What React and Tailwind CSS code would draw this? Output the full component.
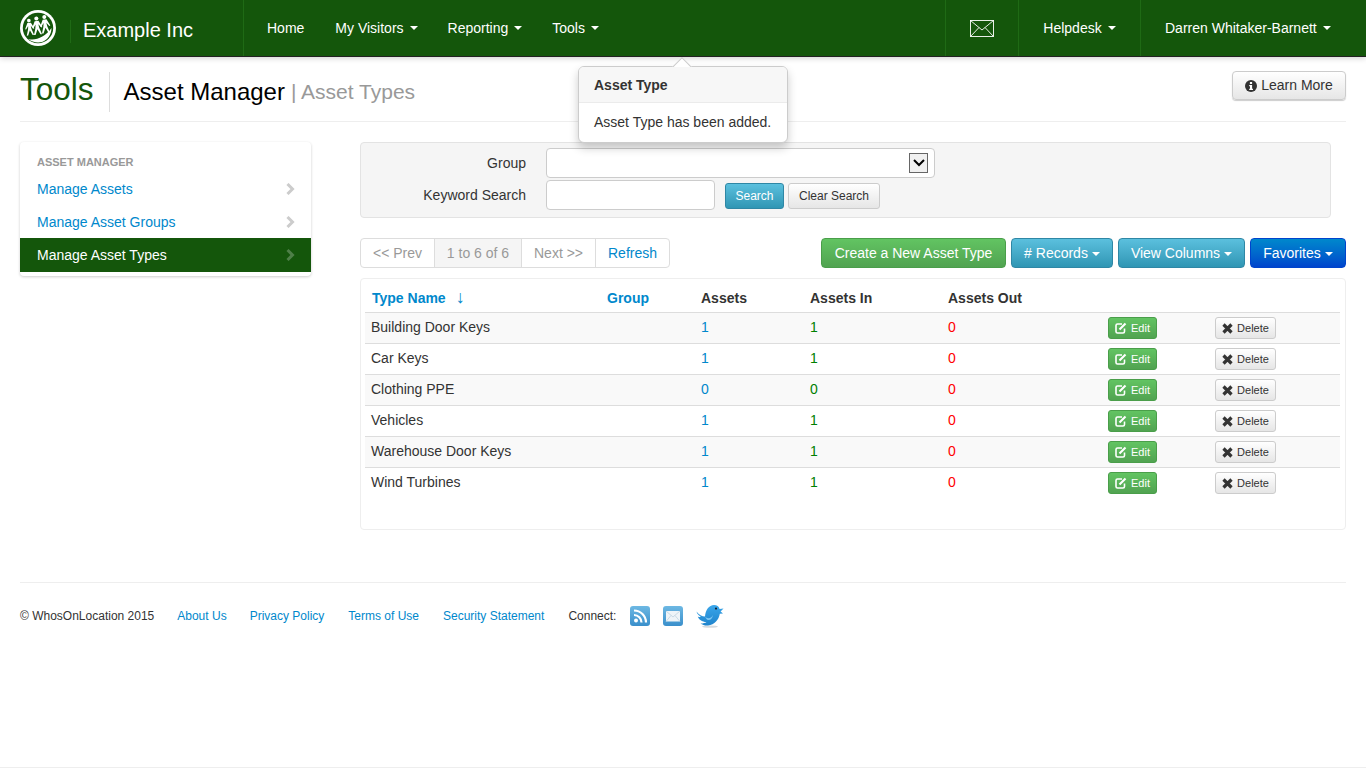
const ROWS = [
  { name: 'Building Door Keys', assets: 1, assetsIn: 1, out: 0 },
  { name: 'Car Keys', assets: 1, assetsIn: 1, out: 0 },
  { name: 'Clothing PPE', assets: 0, assetsIn: 0, out: 0 },
  { name: 'Vehicles', assets: 1, assetsIn: 1, out: 0 },
  { name: 'Warehouse Door Keys', assets: 1, assetsIn: 1, out: 0 },
  { name: 'Wind Turbines', assets: 1, assetsIn: 1, out: 0 },
];

const SIDE_LINKS = ['Manage Assets', 'Manage Asset Groups'];

function Caret({ className = 'ml-[6px]' }) {
  return <span className={`inline-block align-middle w-0 h-0 border-x-[4px] border-x-transparent border-t-[4px] border-t-white ${className}`} />;
}

function Figure({ x, y, s }) {
  return (
    <g transform={`translate(${x} ${y}) scale(${s}) rotate(-6)`} fill="white">
      <circle cx="0" cy="-7.5" r="2.3" />
      <path d="M-2.2 -4.6 L2.2 -4.6 L5.8 2.8 L4.6 3.4 L1.6 -0.8 L2.2 3.4 L4.6 11 L2.8 11 L0 4.8 L-2.8 11 L-4.6 11 L-2.2 3.4 L-1.6 -0.8 L-4.6 3.4 L-5.8 2.8 Z" />
    </g>
  );
}

function Logo() {
  return (
    <svg width="36" height="36" viewBox="0 0 36 36" className="shrink-0">
      <circle cx="18" cy="18" r="18" fill="white" />
      <circle cx="18" cy="18" r="15.2" fill="#14560b" />
      <path d="M8 29 C16 31 25 27 31.5 18 C31.5 24 28 30 22 32 C17 33.2 12 32 8 29 Z" fill="white" />
      <Figure x={9.5} y={16.5} s={0.8} />
      <Figure x={17} y={15} s={0.88} />
      <Figure x={25} y={13.5} s={0.88} />
    </svg>
  );
}

function Chevron({ color }) {
  return (
    <svg width="9" height="12" viewBox="0 0 9 12" fill="none" stroke={color} strokeWidth="3">
      <path d="M1.5 1 L6.5 6 L1.5 11" />
    </svg>
  );
}

function EditIcon() {
  return (
    <svg width="12" height="12" viewBox="0 0 12 12" fill="none" stroke="white">
      <path d="M7 2 L2.5 2 Q1 2 1 3.5 L1 9.5 Q1 11 2.5 11 L8 11 Q9.5 11 9.5 9.5 L9.5 6.5" strokeWidth="1.6" />
      <path d="M4.5 7.5 L10.5 1.5" strokeWidth="2.2" />
    </svg>
  );
}

function CrossIcon() {
  return (
    <svg width="11" height="11" viewBox="0 0 11 11" fill="none" stroke="#333" strokeWidth="3.2">
      <path d="M1.5 1.5 L9.5 9.5 M9.5 1.5 L1.5 9.5" />
    </svg>
  );
}

function InfoIcon() {
  return (
    <svg width="12" height="12" viewBox="0 0 12 12">
      <circle cx="6" cy="6" r="6" fill="#333" />
      <rect x="4.9" y="2" width="2.2" height="2" fill="white" />
      <path d="M4.2 5 L7.1 5 L7.1 8.8 L8 8.8 L8 10 L4.2 10 L4.2 8.8 L5 8.8 L5 6.2 L4.2 6.2 Z" fill="white" />
    </svg>
  );
}

function NavLink({ children, caret = true, className = '' }) {
  return (
    <a className={`flex items-center text-white text-[14px] ${className}`}>
      {children}
      {caret && <Caret />}
    </a>
  );
}

function Popover() {
  return (
    <div className="absolute left-[578px] top-[66px] w-[210px] h-[77px] bg-white border border-[#ccc] rounded-[6px] shadow-[0_5px_10px_rgba(0,0,0,0.2)] z-10">
      <span className="absolute left-[96px] -top-[7px] w-[14px] h-[14px] rotate-45 bg-white border-l border-t border-[#ccc]" />
      <div className="relative h-[36px] pt-[2px] bg-[#f7f7f7] border-b border-[#ebebeb] rounded-t-[5px] px-[15px] flex items-center text-[14px] font-bold text-[#333]">Asset Type</div>
      <div className="px-[15px] pt-[9px] text-[14px] leading-[20px] text-[#333]">Asset Type has been added.</div>
    </div>
  );
}

function RssIcon() {
  return (
    <svg width="20" height="20" viewBox="0 0 20 20" className="block">
      <defs>
        <linearGradient id="blueBox" x1="0" y1="0" x2="0" y2="1">
          <stop offset="0" stopColor="#6db8e3" />
          <stop offset="1" stopColor="#3a8fcb" />
        </linearGradient>
      </defs>
      <rect width="20" height="20" rx="3" fill="url(#blueBox)" />
      <circle cx="6" cy="14.5" r="2" fill="white" />
      <path d="M4 9 A7.5 7.5 0 0 1 11.5 16.5" stroke="white" strokeWidth="2.2" fill="none" />
      <path d="M4 4.5 A12 12 0 0 1 16 16.5" stroke="white" strokeWidth="2.2" fill="none" />
    </svg>
  );
}

function MailIcon() {
  return (
    <svg width="20" height="20" viewBox="0 0 20 20" className="block">
      <defs>
        <linearGradient id="blueBox2" x1="0" y1="0" x2="0" y2="1">
          <stop offset="0" stopColor="#6db8e3" />
          <stop offset="1" stopColor="#3a8fcb" />
        </linearGradient>
      </defs>
      <rect width="20" height="20" rx="3" fill="url(#blueBox2)" />
      <rect x="3" y="5" width="14" height="10.5" fill="#eef4f8" />
      <path d="M3 5 L10 11 L17 5 M3 15.5 L8 9.5 M17 15.5 L12 9.5" stroke="#b9cfdd" strokeWidth="0.7" fill="none" />
    </svg>
  );
}

function TwitterIcon() {
  return (
    <svg width="28" height="24" viewBox="0 0 28 24" className="block">
      <defs>
        <linearGradient id="birdFill" x1="0" y1="0" x2="0" y2="1">
          <stop offset="0" stopColor="#3aa6ea" />
          <stop offset="1" stopColor="#1f84cc" />
        </linearGradient>
      </defs>
      <ellipse cx="14" cy="22.6" rx="8" ry="1.2" fill="#d5dade" />
      <path d="M0.5 7.5 C3 11 6 12.5 9 12.5 C9.5 6 13 1 18 1 C21 1 23 2.6 23.6 5 L27.5 4.5 L24.6 7.4 L27 9.6 L23.8 9.8 C23 15.5 18.5 21 12 21.5 C9 21.7 6.5 20.8 4.5 19.5 C7 19.6 9 19 10.5 18 C6 18 2.5 15 1.8 12.4 C3 13 4 13 5 12.8 C2.8 11.6 1 9.8 0.5 7.5 Z" fill="url(#birdFill)" />
      <path d="M9 12.5 C11 15 15 15 17 11 C16 17 11 18 9 12.5 Z" fill="#7cc6f2" />
      <circle cx="20" cy="4.6" r="1.1" fill="#123" />
    </svg>
  );
}

export default function App() {
  return (
    <div className="relative min-h-[768px] flex flex-col bg-white text-[#333] font-['Liberation_Sans',Arial,sans-serif]">
      {/* Top bar */}
      <header className="h-[57px] shrink-0 flex bg-[#14560b] border-b border-[#222] shadow-[0_1px_6px_rgba(0,0,0,0.2)]">
        <div className="w-[244px] shrink-0 flex items-center pl-[20px] border-r border-[#1f6a15]">
          <Logo />
          <span className="ml-[14px] mt-[7px] h-[23px] border-l border-[#1f6a15]" />
          <span className="ml-[12px] mt-[4px] text-white text-[20px]">Example Inc</span>
        </div>
        <nav className="flex-1 flex pl-[23px] gap-[30px]">
          <NavLink caret={false} className="mr-[1px]">Home</NavLink>
          <NavLink>My Visitors</NavLink>
          <NavLink>Reporting</NavLink>
          <NavLink>Tools</NavLink>
        </nav>
        <div className="w-[73px] flex items-center justify-center border-l border-[#1f6a15]">
          <svg width="24" height="17" viewBox="0 0 24 17" fill="none" stroke="white" strokeWidth="0.9">
            <rect x="0.5" y="0.5" width="23" height="16" />
            <path d="M0.5 0.5 L12 10 L23.5 0.5 M0.5 16.5 L9 7.5 M23.5 16.5 L15 7.5" />
          </svg>
        </div>
        <NavLink className="w-[122px] justify-center border-l border-[#1f6a15]">Helpdesk</NavLink>
        <NavLink className="w-[226px] pl-[24px] border-l border-[#1f6a15]">Darren Whitaker-Barnett</NavLink>
      </header>

      <Popover />

      <main className="px-5">
        {/* Page title */}
        <div className="h-[65px] flex items-start border-b border-[#eee]">
          <div className="mt-[15px] h-[40px] pb-[4px] pr-[15px] border-r border-[#ddd] flex items-center text-[31.5px] leading-none text-[#14560b]">Tools</div>
          <div className="mt-[15px] h-[40px] pl-[14px] pb-[1px] flex items-center">
            <span className="text-[24px] leading-none text-black">Asset Manager</span>
            <span className="ml-[6px] text-[21px] leading-none text-[#999]">| Asset Types</span>
          </div>
          <button className="ml-auto mt-[14px] w-[114px] h-[29px] flex items-center justify-center gap-[4px] text-[14px] text-[#333] border border-[#ccc] rounded-[4px] bg-gradient-to-b from-white to-[#e6e6e6] shadow-[0_1px_1px_rgba(0,0,0,0.2)]">
            <InfoIcon />
            Learn More
          </button>
        </div>

        <div className="flex items-start mt-[20px]">
          {/* Sidebar */}
          <aside className="w-[291px] shrink-0 h-[134px] mr-[49px] rounded-[4px] bg-white shadow-[0_1px_3px_rgba(0,0,0,0.2)] pt-[12px]">
            <div className="pl-[17px] h-[18px] text-[11px] leading-[16px] font-bold text-[#999]">ASSET MANAGER</div>
            {SIDE_LINKS.map(l => (
              <a key={l} className="h-[33px] pt-[1px] pl-[17px] pr-[16px] flex items-center justify-between text-[14px] text-[#0088cc]">
                {l}
                <Chevron color="#ccc" />
              </a>
            ))}
            <a className="h-[34px] pl-[17px] pr-[16px] flex items-center justify-between text-[14px] text-white bg-[#14560b]">
              Manage Asset Types
              <Chevron color="#4e7f48" />
            </a>
          </aside>

          <div className="flex-1 min-w-0">
            {/* Search form */}
            <div className="mr-[15px] h-[76px] bg-[#f5f5f5] border border-[#e3e3e3] rounded-[4px] grid grid-cols-[165px_1fr] gap-x-[20px] pt-[5px] text-[14px] content-start">
              <label className="h-[30px] flex items-center justify-end text-[#333]">Group</label>
              <div className="h-[30px] w-[389px] bg-white border border-[#ccc] rounded-[4px] flex items-center justify-end pr-[6px]">
                <span className="w-[19px] h-[20px] border border-[#666] bg-[#f0f0f0] flex items-center justify-center">
                  <svg width="12" height="8" viewBox="0 0 12 8" fill="none" stroke="black" strokeWidth="2"><path d="M1 1 L6 6 L11 1" /></svg>
                </span>
              </div>
              <label className="h-[30px] mt-[2px] flex items-center justify-end text-[#333]">Keyword Search</label>
              <div className="mt-[2px] flex items-center">
                <input className="w-[169px] h-[30px] bg-white border border-[#ccc] rounded-[4px]" />
                <button className="ml-[10px] mt-[2px] w-[59px] h-[26px] text-[12px] text-white rounded-[3px] border border-[#2f87a5] bg-gradient-to-b from-[#5bc0de] to-[#2f96b4]">Search</button>
                <button className="ml-[4px] mt-[2px] w-[92px] h-[26px] text-[12px] text-[#333] rounded-[3px] border border-[#ccc] bg-gradient-to-b from-white to-[#e6e6e6]">Clear Search</button>
              </div>
            </div>

            {/* Toolbar */}
            <div className="mt-[20px] h-[30px] flex items-center text-[14px]">
              <div className="flex h-[30px] border border-[#ddd] rounded-[4px] bg-white">
                <span className="w-[74px] flex items-center justify-center text-[#999] border-r border-[#ddd]">&lt;&lt; Prev</span>
                <span className="w-[87px] flex items-center justify-center text-[#999] bg-[#f5f5f5] border-r border-[#ddd]">1 to 6 of 6</span>
                <span className="w-[74px] flex items-center justify-center text-[#999] border-r border-[#ddd]">Next &gt;&gt;</span>
                <span className="w-[73px] flex items-center justify-center text-[#0088cc]">Refresh</span>
              </div>
              <div className="ml-auto flex gap-[5px]">
                <button className="w-[185px] h-[30px] text-white rounded-[4px] border border-[#4a9e4a] bg-gradient-to-b from-[#62c462] to-[#51a351]">Create a New Asset Type</button>
                <button className="w-[102px] h-[30px] text-white rounded-[4px] border border-[#2f87a5] bg-gradient-to-b from-[#5bc0de] to-[#2f96b4]">
                  # Records<Caret className="ml-[4px]" />
                </button>
                <button className="w-[127px] h-[30px] text-white rounded-[4px] border border-[#2f87a5] bg-gradient-to-b from-[#5bc0de] to-[#2f96b4]">
                  View Columns<Caret className="ml-[4px]" />
                </button>
                <button className="w-[96px] h-[30px] text-white rounded-[4px] border border-[#0044cc] bg-gradient-to-b from-[#0088cc] to-[#0044cc]">
                  Favorites<Caret className="ml-[4px]" />
                </button>
              </div>
            </div>

            {/* Table */}
            <div className="mt-[10px] h-[252px] border border-[#eee] rounded-[4px] pl-[4px] pr-[5px] bg-white">
              <table className="table-fixed w-full border-collapse text-[14px]">
                <colgroup>
                  <col className="w-[236px]" />
                  <col className="w-[94px]" />
                  <col className="w-[109px]" />
                  <col className="w-[138px]" />
                  <col className="w-[160px]" />
                  <col className="w-[107px]" />
                  <col />
                </colgroup>
                <thead>
                  <tr className="h-[33px] text-left font-bold">
                    <th className="pl-[7px] pt-[6px] text-[#0088cc]">Type Name<span className="ml-[10px] text-[18px] leading-none font-normal">↓</span></th>
                    <th className="pl-[6px] pt-[6px] text-[#0088cc]">Group</th>
                    <th className="pl-[6px] pt-[6px]">Assets</th>
                    <th className="pl-[6px] pt-[6px]">Assets In</th>
                    <th className="pl-[6px] pt-[6px]">Assets Out</th>
                    <th />
                    <th />
                  </tr>
                </thead>
                <tbody>
                  {ROWS.map((r, i) => (
                    <tr key={r.name} className={`h-[31px] border-t border-[#ddd] ${i % 2 === 0 ? 'bg-[#f9f9f9]' : ''}`}>
                      <td className="pl-[6px]">{r.name}</td>
                      <td />
                      <td className="pl-[6px] text-[#0088cc]">{r.assets}</td>
                      <td className="pl-[6px] text-[#008000]">{r.assetsIn}</td>
                      <td className="pl-[6px] text-[#ff0000]">{r.out}</td>
                      <td className="pl-[6px] pt-[1px]">
                        <button className="w-[49px] h-[22px] flex items-center justify-center gap-[4px] text-[11px] text-white rounded-[3px] border border-[#4a9e4a] bg-gradient-to-b from-[#62c462] to-[#51a351]">
                          <EditIcon />Edit
                        </button>
                      </td>
                      <td className="pl-[6px] pt-[1px]">
                        <button className="w-[61px] h-[22px] flex items-center justify-center gap-[4px] text-[11px] text-[#333] rounded-[3px] border border-[#ccc] bg-gradient-to-b from-white to-[#e6e6e6]">
                          <CrossIcon />Delete
                        </button>
                      </td>
                    </tr>
                  ))}
                </tbody>
              </table>
            </div>
          </div>
        </div>

        {/* Footer */}
        <footer className="mt-[52px] pt-[20px] border-t border-[#eee] h-[46px] flex items-center text-[12px] text-[#333]">
          <span>© WhosOnLocation 2015</span>
          <a className="ml-[23px] text-[#0088cc]">About Us</a>
          <a className="ml-[23px] text-[#0088cc]">Privacy Policy</a>
          <a className="ml-[24px] text-[#0088cc]">Terms of Use</a>
          <a className="ml-[24px] text-[#0088cc]">Security Statement</a>
          <span className="ml-[24px]">Connect:</span>
          <span className="ml-[14px]"><RssIcon /></span>
          <span className="ml-[13px]"><MailIcon /></span>
          <span className="ml-[13px]"><TwitterIcon /></span>
        </footer>
      </main>
      <div className="mt-auto border-b border-[#eee]" />
    </div>
  );
}
